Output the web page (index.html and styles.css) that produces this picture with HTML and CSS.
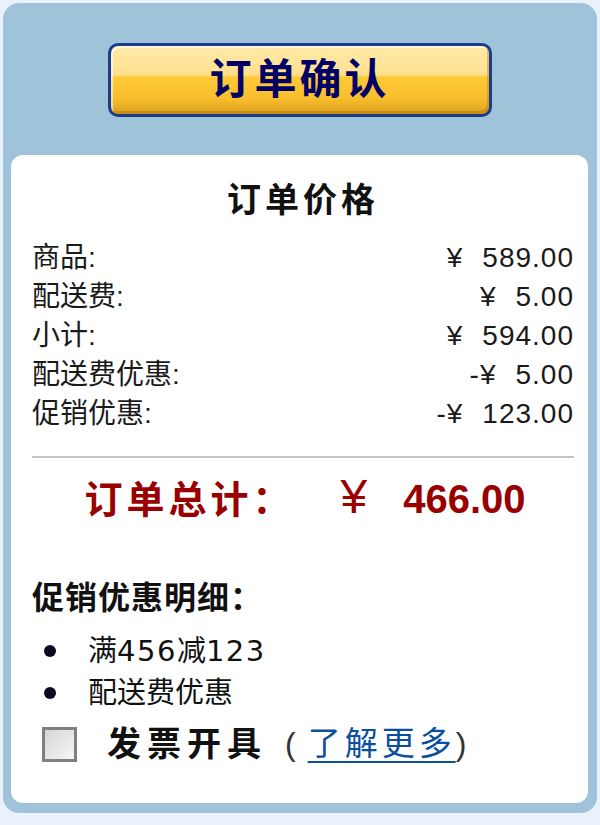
FILE: index.html
```html
<!DOCTYPE html>
<html lang="zh-CN">
<head>
    <meta charset="UTF-8">
    <meta name="viewport" content="width=device-width, initial-scale=1.0">
    <title>订单确认</title>
    <link rel="stylesheet" href="styles.css">
</head>
<body>
    <div class="order-box">

        <div class="confirm-row">
            <button class="confirm-button">订单确认</button>
        </div>

        <div class="price-card">
            <h2 class="price-title">订单价格</h2>

            <ul class="price-rows">
                <li><span>商品:</span><span class="price-value"><span class="yen">¥</span>589.00</span></li>
                <li><span>配送费:</span><span class="price-value"><span class="yen">¥</span>5.00</span></li>
                <li><span>小计:</span><span class="price-value"><span class="yen">¥</span>594.00</span></li>
                <li><span>配送费优惠:</span><span class="price-value">-<span class="yen">¥</span>5.00</span></li>
                <li><span>促销优惠:</span><span class="price-value">-<span class="yen">¥</span>123.00</span></li>
            </ul>

            <div class="divider"></div>

            <div class="grand-total">
                <span class="total-label">订单总计：</span>
                <span class="total-yen">¥</span>
                <span class="total-amount">466.00</span>
            </div>

            <h3 class="promo-title">促销优惠明细：</h3>
            <ul class="promo-list">
                <li>满<span class="num">456</span>减<span class="num">123</span></li>
                <li>配送费优惠</li>
            </ul>

            <label class="invoice-row">
                <span class="checkbox"></span>
                <span class="invoice-text">发票开具</span>
                <span class="paren">(</span><a href="#" class="more-link">了解更多</a><span class="paren paren-close">)</span>
            </label>
        </div>
    </div>
</body>
</html>
```

FILE: styles.css
```css
* {
    margin: 0;
    padding: 0;
    box-sizing: border-box;
    font-family: "Liberation Sans", "Noto Sans CJK SC", sans-serif;
}

body {
    background-color: #e9f2fc;
    color: #111;
}

.order-box {
    margin: 3px;
    height: 810px;
    padding: 40px 9px 10px 8px;
    background-color: #9fc4d9;
    border-radius: 16px;
    display: flex;
    flex-direction: column;
}

.confirm-row {
    display: flex;
    justify-content: center;
    margin-bottom: 38px;
}

.confirm-button {
    width: 384px;
    height: 74px;
    border: 3px solid #1d3d8c;
    border-radius: 10px;
    background: linear-gradient(#ffeaa9 0%, #ffe08e 42%, #ffca36 46%, #f8bd2c 78%, #d99f1f 100%);
    box-shadow: inset 2px 2px 0 rgba(255, 255, 255, 0.55), inset -2px -3px 0 rgba(170, 110, 10, 0.35);
    color: #000066;
    font-size: 42px;
    font-weight: bold;
    letter-spacing: 3px;
    line-height: 1;
    cursor: pointer;
}

.price-card {
    flex: 1;
    background-color: #fff;
    border-radius: 12px;
    padding: 27px 14px 0 21px;
}

.price-title {
    text-align: center;
    font-size: 34px;
    line-height: 36px;
    letter-spacing: 4px;
    margin-bottom: 20px;
}

.price-rows {
    list-style: none;
}

.price-rows li {
    display: flex;
    justify-content: space-between;
    font-size: 28px;
    line-height: 39px;
    color: #1a1a1a;
}

.price-value {
    letter-spacing: 1px;
}

.yen {
    margin-right: 19px;
}

.divider {
    height: 2px;
    background-color: #c4c4c4;
    margin: 23px 0 17px;
}

.grand-total {
    display: flex;
    justify-content: center;
    align-items: baseline;
    color: #990000;
    font-size: 40px;
    font-weight: bold;
    line-height: 44px;
    padding-left: 4px;
}

.total-label {
    font-size: 38px;
    letter-spacing: 4px;
}

.total-yen {
    margin: 0 36px 0 46px;
    font-size: 48px;
    font-weight: normal;
}

.promo-title {
    font-size: 32px;
    line-height: 40px;
    letter-spacing: 1px;
    margin-top: 56px;
    margin-bottom: 12px;
}

.promo-list {
    list-style: none;
    padding-left: 56px;
}

.promo-list li {
    position: relative;
    font-size: 29px;
    line-height: 42px;
}

.promo-list li::before {
    content: "";
    position: absolute;
    left: -44px;
    top: 15px;
    width: 12px;
    height: 12px;
    border-radius: 50%;
    background-color: #0a0a20;
}

.num {
    font-family: "DejaVu Sans", sans-serif;
    font-size: 29px;
    letter-spacing: 1.5px;
}

.invoice-row {
    display: flex;
    align-items: center;
    margin-top: 8px;
    padding-left: 10px;
    font-size: 32px;
    line-height: 44px;
}

.checkbox {
    width: 35px;
    height: 35px;
    border: 3px solid #808080;
    background: linear-gradient(135deg, #d6d6d6, #f6f6f6);
    margin-right: 30px;
}

.invoice-text {
    font-weight: bold;
    font-size: 34px;
    letter-spacing: 6px;
    margin-right: 18px;
}

.paren {
    color: #333;
    font-weight: normal;
    margin-right: 12px;
}

.paren-close {
    margin: 0;
}

.more-link {
    color: #0b4f9f;
    font-size: 33px;
    letter-spacing: 4px;
    text-decoration: underline;
    text-underline-offset: 6px;
    text-decoration-thickness: 2px;
}
```
